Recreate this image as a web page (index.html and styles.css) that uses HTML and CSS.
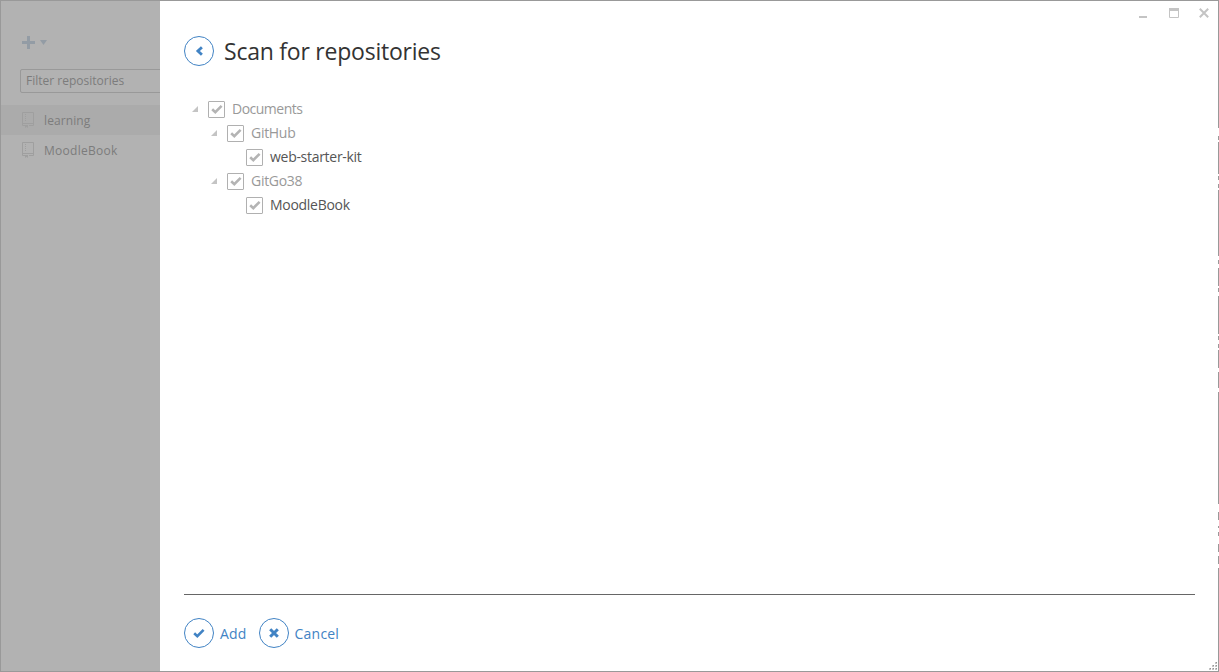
FILE: index.html
```html
<!DOCTYPE html>
<html lang="en">
<head>
<meta charset="utf-8">
<title>Scan for repositories</title>
<link rel="stylesheet" href="styles.css">
</head>
<body>
<svg class="defs" width="0" height="0" aria-hidden="true">
  <symbol id="check" viewBox="0 0 12 10"><path d="M1.2 5.2 4.3 8.1 10.6 1.8" fill="none" stroke="currentColor" stroke-width="2.6"/></symbol>
  <symbol id="arrow" viewBox="0 0 6 6"><path d="M6 0V6H0Z" fill="currentColor"/></symbol>
  <symbol id="book" viewBox="0 0 12 16"><path d="M.5.5H11.5V13.5H7M3 13.5H.5V.5M.5 11.5H11.5" fill="none" stroke="currentColor"/><path d="M3 2h1v1H3zM3 4h1v1H3zM3 6h1v1H3zM3 8h1v1H3zM3 13h3v3L4.5 14.8 3 16z" fill="currentColor"/></symbol>
</svg>
<div class="window">
  <aside class="sidebar">
    <div class="add-menu">
      <svg width="13" height="13"><path d="M5 0h3v5h5v3H8v5H5V8H0V5h5z" fill="currentColor"/></svg>
      <svg width="7" height="5"><path d="M0 0h7L3.5 5z" fill="currentColor"/></svg>
    </div>
    <div class="filter"><span class="t-filter">Filter repositories</span></div>
    <div class="repo selected"><svg width="12" height="16"><use href="#book"/></svg><span class="t-learning">learning</span></div>
    <div class="repo"><svg width="12" height="16"><use href="#book"/></svg><span class="t-side-book">MoodleBook</span></div>
  </aside>
  <main class="panel">
    <header class="heading">
      <span class="circle"><svg width="8" height="10"><path d="M6.9 1.2 2.9 5 6.9 8.8" fill="none" stroke="currentColor" stroke-width="2.8"/></svg></span>
      <h1>Scan for repositories</h1>
    </header>
    <div class="tree">
      <div class="row"><svg class="arrow" width="6" height="6"><use href="#arrow"/></svg><span class="box"><svg width="12" height="10"><use href="#check"/></svg></span><span class="name t-documents">Documents</span></div>
      <div class="row level-1"><svg class="arrow" width="6" height="6"><use href="#arrow"/></svg><span class="box"><svg width="12" height="10"><use href="#check"/></svg></span><span class="name">GitHub</span></div>
      <div class="row level-2"><span class="box"><svg width="12" height="10"><use href="#check"/></svg></span><span class="name">web-starter-kit</span></div>
      <div class="row level-1"><svg class="arrow" width="6" height="6"><use href="#arrow"/></svg><span class="box"><svg width="12" height="10"><use href="#check"/></svg></span><span class="name">GitGo38</span></div>
      <div class="row level-2"><span class="box"><svg width="12" height="10"><use href="#check"/></svg></span><span class="name">MoodleBook</span></div>
    </div>
    <footer class="actions">
      <span class="circle"><svg width="12" height="10"><use href="#check"/></svg></span><span class="label">Add</span>
      <span class="circle"><svg width="10" height="10"><path d="M1.2 1.2 8.8 8.8M8.8 1.2 1.2 8.8" stroke="currentColor" stroke-width="3"/></svg></span><span class="label">Cancel</span>
    </footer>
  </main>
  <div class="controls">
    <svg width="8" height="2"><path d="M0 0h8v2H0z" fill="currentColor"/></svg>
    <svg width="10" height="10"><path d="M.5.5h9v9h-9z" fill="none" stroke="currentColor"/><path d="M0 0h10v3H0z" fill="currentColor"/></svg>
    <svg width="10" height="10"><path d="M.8.8 9.2 9.2M9.2.8.8 9.2" stroke="currentColor" stroke-width="2"/></svg>
  </div>
  <svg class="grip" width="8" height="8"><path d="M6 0h2v2H6zM3 3h2v2H3zM6 3h2v2H6zM0 6h2v2H0zM3 6h2v2H3zM6 6h2v2H6z" fill="#c4c4c4"/><path d="M7 0h1v1H7zM4 3h1v1H4zM7 3h1v1H7zM1 6h1v1H1zM4 6h1v1H4zM7 6h1v1H7z" fill="#949494"/></svg>
  <svg class="edge" width="1" height="672"><path d="M.5 0V672"/></svg>
</div>
</body>
</html>
```

FILE: styles.css
```css
* { box-sizing: border-box; }

body {
  margin: 0;
  font-family: "Open Sans", "Noto Sans", sans-serif;
  font-size: 14px;
}

svg { display: block; flex: none; }
.defs { position: absolute; }

.window {
  position: relative;
  display: flex;
  width: 1219px;
  height: 672px;
  overflow: hidden;
  background: #fff;
  border: 1px solid #999;
  border-right: 0;
}

.sidebar {
  width: 159px;
  flex: none;
  padding-top: 35px;
  overflow: hidden;
  background: #b2b2b2;
  color: #7c7c7c;
  font-size: 12px;
}

.add-menu {
  display: flex;
  align-items: center;
  gap: 5px;
  height: 13px;
  margin-left: 21px;
  color: #939ca5;
}

.filter {
  display: flex;
  align-items: center;
  width: 180px;
  height: 24px;
  margin: 20px 0 12px 19px;
  padding: 0 0 2px 5px;
  border: 1px solid #999;
  border-radius: 2px;
}

.repo {
  display: flex;
  align-items: center;
  gap: 10px;
  height: 30px;
  padding-left: 21px;
}

.repo svg { color: #9f9f9f; }
.selected { background: #ababab; }
.t-learning { letter-spacing: 0.1px; }
.t-side-book { letter-spacing: 0.27px; }

.panel {
  flex: 1;
  display: flex;
  flex-direction: column;
  padding: 35px 24px 0;
}

.heading {
  display: flex;
  align-items: center;
  gap: 10px;
  height: 30px;
}

h1 {
  margin: 0;
  color: #333;
  font-size: 23px;
  font-weight: 400;
  line-height: 30px;
  letter-spacing: -0.23px;
  white-space: nowrap;
}

.circle {
  display: flex;
  align-items: center;
  justify-content: center;
  width: 30px;
  height: 30px;
  border: 1px solid #4183c4;
  border-radius: 50%;
  color: #4183c4;
}

.tree { margin-top: 31px; padding-left: 8px; }

.row {
  display: flex;
  align-items: center;
  height: 24px;
  color: #999;
}

.level-1 { padding-left: 19px; }
.level-2 { padding-left: 54px; color: #555; }
.arrow { margin-right: 10px; color: #c4c4c4; }
.name { padding-bottom: 2px; letter-spacing: -0.29px; }
.t-documents { letter-spacing: -0.5px; }

.box {
  display: flex;
  align-items: center;
  padding-left: 2px;
  width: 17px;
  height: 17px;
  margin-right: 7px;
  border: 1px solid #b0b0b0;
  border-radius: 1px;
  color: #b4b4b4;
}

.actions {
  display: flex;
  align-items: center;
  height: 77px;
  margin-top: auto;
  border-top: 1px solid #666;
}

.label { margin: 0 12px 0 6px; color: #4183c4; letter-spacing: 0.2px; }

.controls {
  position: absolute;
  top: 7px;
  right: 10px;
  display: flex;
  align-items: center;
  gap: 20px;
  color: #c4c4c4;
}

.controls svg:first-child { margin: 7px 2px 0 0; }

.grip { position: absolute; right: 2px; bottom: 1px; }

.edge { position: absolute; top: -1px; right: 0; }

.edge path {
  fill: none;
  stroke: #999;
  stroke-dasharray: 128 8 4 2 32 2 4 4 4 2 66 4 4 4 18 2 4 4 38 2 4 4 4 2 18 4 16 4 112 8 8 6 2 4 4 8 8 4 8 4 104 0;
}
```
